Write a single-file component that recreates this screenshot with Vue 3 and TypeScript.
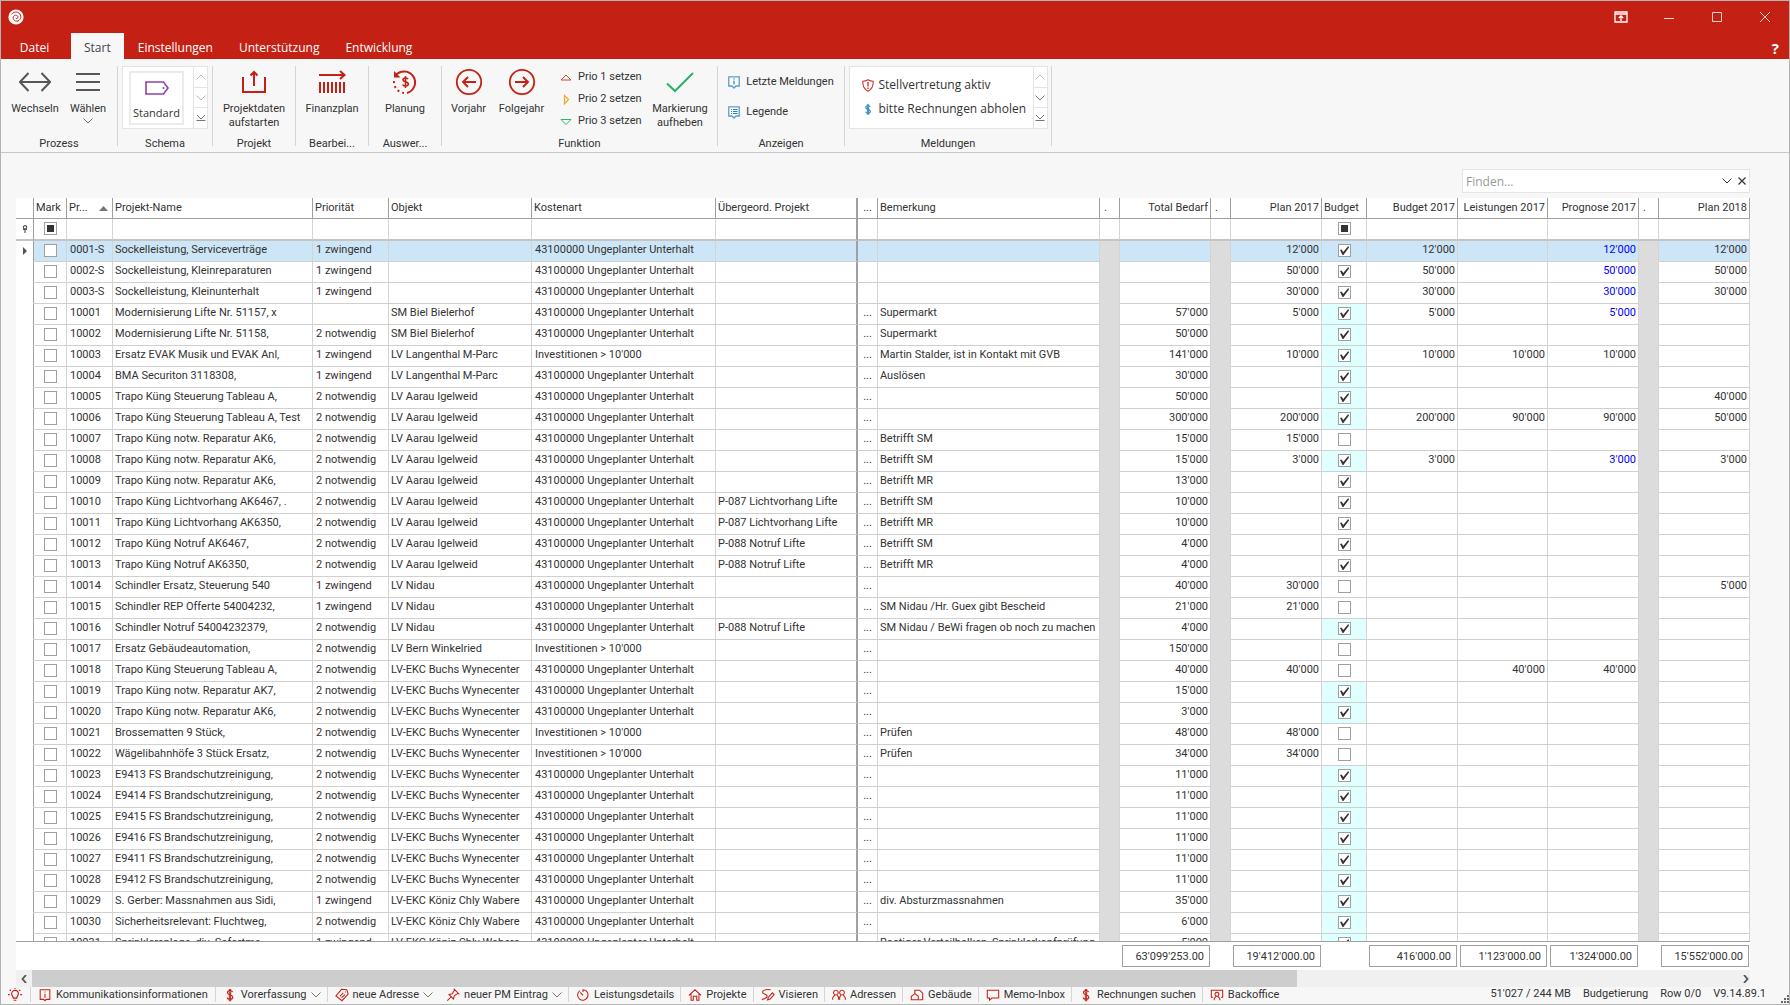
<script setup lang="ts">
import { ref } from 'vue'

interface Row {
  nr: string
  name: string
  prio: string
  objekt: string
  kost: string
  ueber: string
  dots: string
  bem: string
  total: string
  plan: string
  budget: boolean
  tint: boolean
  b17: string
  l17: string
  p17: string
  blue: boolean
  p18: string
}

const UNTERHALT = '43100000 Ungeplanter Unterhalt'
const INVEST = "Investitionen > 10'000"
const PRIO = ['', '1 zwingend', '2 notwendig']
const BUCHS = 'LV-EKC Buchs Wynecenter'
const AARAU = 'LV Aarau Igelweid'

function row(
  nr: string,
  name: string,
  prio: number,
  objekt: string,
  total: string,
  state: '' | 'x' | 'xt',
  more: Partial<Row> = {},
): Row {
  return {
    nr, name, prio: PRIO[prio], objekt, kost: UNTERHALT, ueber: '', dots: '...', bem: '',
    total, plan: '', budget: state !== '', tint: state === 'xt',
    b17: '', l17: '', p17: '', blue: false, p18: '', ...more,
  }
}

const rows = ref<Row[]>([
  row('0001-S', 'Sockelleistung, Serviceverträge', 1, '', '', 'x', { dots: '', plan: "12'000", b17: "12'000", p17: "12'000", blue: true, p18: "12'000" }),
  row('0002-S', 'Sockelleistung, Kleinreparaturen', 1, '', '', 'x', { dots: '', plan: "50'000", b17: "50'000", p17: "50'000", blue: true, p18: "50'000" }),
  row('0003-S', 'Sockelleistung, Kleinunterhalt', 1, '', '', 'x', { dots: '', plan: "30'000", b17: "30'000", p17: "30'000", blue: true, p18: "30'000" }),
  row('10001', 'Modernisierung Lifte Nr. 51157, x', 0, 'SM Biel Bielerhof', "57'000", 'xt', { bem: 'Supermarkt', plan: "5'000", b17: "5'000", p17: "5'000", blue: true }),
  row('10002', 'Modernisierung Lifte Nr. 51158,', 2, 'SM Biel Bielerhof', "50'000", 'xt', { bem: 'Supermarkt' }),
  row('10003', 'Ersatz EVAK Musik und EVAK Anl,', 1, 'LV Langenthal M-Parc', "141'000", 'xt', { kost: INVEST, bem: 'Martin Stalder, ist in Kontakt mit GVB', plan: "10'000", b17: "10'000", l17: "10'000", p17: "10'000" }),
  row('10004', 'BMA Securiton 3118308,', 1, 'LV Langenthal M-Parc', "30'000", 'xt', { bem: 'Auslösen' }),
  row('10005', 'Trapo Küng Steuerung Tableau A,', 2, AARAU, "50'000", 'xt', { p18: "40'000" }),
  row('10006', 'Trapo Küng Steuerung Tableau A, Test', 2, AARAU, "300'000", 'xt', { plan: "200'000", b17: "200'000", l17: "90'000", p17: "90'000", p18: "50'000" }),
  row('10007', 'Trapo Küng notw. Reparatur AK6,', 2, AARAU, "15'000", '', { bem: 'Betrifft SM', plan: "15'000" }),
  row('10008', 'Trapo Küng notw. Reparatur AK6,', 2, AARAU, "15'000", 'xt', { bem: 'Betrifft SM', plan: "3'000", b17: "3'000", p17: "3'000", blue: true, p18: "3'000" }),
  row('10009', 'Trapo Küng notw. Reparatur AK6,', 2, AARAU, "13'000", 'x', { bem: 'Betrifft MR' }),
  row('10010', 'Trapo Küng Lichtvorhang AK6467, .', 2, AARAU, "10'000", 'x', { ueber: 'P-087 Lichtvorhang Lifte', bem: 'Betrifft SM' }),
  row('10011', 'Trapo Küng Lichtvorhang AK6350,', 2, AARAU, "10'000", 'x', { ueber: 'P-087 Lichtvorhang Lifte', bem: 'Betrifft MR' }),
  row('10012', 'Trapo Küng Notruf AK6467,', 2, AARAU, "4'000", 'x', { ueber: 'P-088 Notruf Lifte', bem: 'Betrifft SM' }),
  row('10013', 'Trapo Küng Notruf AK6350,', 2, AARAU, "4'000", 'x', { ueber: 'P-088 Notruf Lifte', bem: 'Betrifft MR' }),
  row('10014', 'Schindler Ersatz, Steuerung 540', 1, 'LV Nidau', "40'000", '', { plan: "30'000", p18: "5'000" }),
  row('10015', 'Schindler REP Offerte 54004232,', 1, 'LV Nidau', "21'000", '', { bem: 'SM Nidau /Hr. Guex gibt Bescheid', plan: "21'000" }),
  row('10016', 'Schindler Notruf 54004232379,', 2, 'LV Nidau', "4'000", 'xt', { ueber: 'P-088 Notruf Lifte', bem: 'SM Nidau / BeWi fragen ob noch zu machen' }),
  row('10017', 'Ersatz Gebäudeautomation,', 2, 'LV Bern Winkelried', "150'000", '', { kost: INVEST }),
  row('10018', 'Trapo Küng Steuerung Tableau A,', 2, BUCHS, "40'000", '', { plan: "40'000", l17: "40'000", p17: "40'000" }),
  row('10019', 'Trapo Küng notw. Reparatur AK7,', 2, BUCHS, "15'000", 'xt'),
  row('10020', 'Trapo Küng notw. Reparatur AK6,', 2, BUCHS, "3'000", 'xt'),
  row('10021', 'Brossematten 9 Stück,', 2, BUCHS, "48'000", '', { kost: INVEST, bem: 'Prüfen', plan: "48'000" }),
  row('10022', 'Wägelibahnhöfe 3 Stück Ersatz,', 2, BUCHS, "34'000", '', { kost: INVEST, bem: 'Prüfen', plan: "34'000" }),
  row('10023', 'E9413 FS Brandschutzreinigung,', 2, BUCHS, "11'000", 'xt'),
  row('10024', 'E9414 FS Brandschutzreinigung,', 2, BUCHS, "11'000", 'xt'),
  row('10025', 'E9415 FS Brandschutzreinigung,', 2, BUCHS, "11'000", 'xt'),
  row('10026', 'E9416 FS Brandschutzreinigung,', 2, BUCHS, "11'000", 'xt'),
  row('10027', 'E9411 FS Brandschutzreinigung,', 2, BUCHS, "11'000", 'xt'),
  row('10028', 'E9412 FS Brandschutzreinigung,', 2, BUCHS, "11'000", 'xt'),
  row('10029', 'S. Gerber: Massnahmen aus Sidi,', 1, 'LV-EKC Köniz Chly Wabere', "35'000", 'xt', { bem: 'div. Absturzmassnahmen' }),
  row('10030', 'Sicherheitsrelevant: Fluchtweg,', 2, 'LV-EKC Köniz Chly Wabere', "6'000", 'xt'),
  row('10031', 'Sprinkleranlage, div. Sofortma,', 1, 'LV-EKC Köniz Chly Wabere', "5'000", 'xt', { bem: 'Rostiger Verteilbalken, Sprinklerkopfprüfung' }),
])

const columns: { label: string; cls: string }[] = [
  { label: '', cls: 'c-ind' },
  { label: 'Mark', cls: 'c-mark' },
  { label: 'Pr...', cls: 'c-nr' },
  { label: 'Projekt-Name', cls: 'c-name' },
  { label: 'Priorität', cls: 'c-prio' },
  { label: 'Objekt', cls: 'c-obj' },
  { label: 'Kostenart', cls: 'c-kost' },
  { label: 'Übergeord. Projekt', cls: 'c-ueber' },
  { label: '...', cls: 'c-dots' },
  { label: 'Bemerkung', cls: 'c-bem' },
  { label: '.', cls: 'c-gap' },
  { label: 'Total Bedarf', cls: 'c-num' },
  { label: '.', cls: 'c-gap' },
  { label: 'Plan 2017', cls: 'c-num' },
  { label: 'Budget', cls: 'c-bud' },
  { label: 'Budget 2017', cls: 'c-num' },
  { label: 'Leistungen 2017', cls: 'c-num c-leist' },
  { label: 'Prognose 2017', cls: 'c-num' },
  { label: '.', cls: 'c-gap' },
  { label: 'Plan 2018', cls: 'c-num' },
]

const sums: Record<number, string> = {
  11: "63'099'253.00",
  13: "19'412'000.00",
  15: "416'000.00",
  16: "1'123'000.00",
  17: "1'324'000.00",
  19: "15'552'000.00",
}

const tabs = ['Datei', 'Start', 'Einstellungen', 'Unterstützung', 'Entwicklung']

const dollar = 'M11 4.5C10.5 3.4 9.4 3 8 3 6.2 3 5 3.9 5 5.3 5 8.6 11.2 7 11.2 10.6 11.2 12.1 9.9 13 8 13 6.3 13 5 12.3 4.8 11M7.2 1V15M8.8 1V15'

const tools: { label: string; d: string; drop?: boolean; sep: boolean }[] = [
  { label: 'Kommunikationsinformationen', d: 'M2.5 2H13.5V13H9.5L8 14.5 6.5 13H2.5ZM8 6.5V11M8 4V5.2', sep: true },
  { label: 'Vorerfassung', d: dollar, drop: true, sep: true },
  { label: 'neue Adresse', d: 'M7.5 1.5L13.5 2 15 7 8 14.500 1 9ZM5.500 9.500L9.500 5.500M7.500 11L11.500 7.500M11.500 4.500h1', drop: true, sep: false },
  { label: 'neuer PM Eintrag', d: 'M1.5 14.5L6 10M3.5 7.5L8.5 12.5 9.5 9 13 6.5 14.5 6.5 9.5 1.5 9.5 3 7 6.5Z', drop: true, sep: true },
  { label: 'Leistungsdetails', d: 'M4.5 3A6 6 0 1 0 8 2V4.5M8 8.5L5 5M11 2.8l1 .6', sep: true },
  { label: 'Projekte', d: 'M1 8.5L8 2 15 8.5M3.5 7V14H6V9.5H10V14H12.5V7', sep: true },
  { label: 'Visieren', d: 'M11 2C5 1 1 3 2 5.5 3 7.5 8 7 7 10 6.5 12 3.5 12 1 13.5M7.5 13.5L8.5 10.5 13 5.5 15 7.5 10.5 12.5Z', sep: true },
  { label: 'Adressen', d: 'M4.5 2.5A2.7 2.7 0 1 1 4.4 2.5M11.5 2.5A2.7 2.7 0 1 1 11.4 2.5M.8 13.5V11L3 8.2M6 8.2L7.5 10.5V13.5M8.8 13.5V10.5L10 8.2M13 8.2L15.2 11V13.5', sep: true },
  { label: 'Gebäude', d: 'M5.5 6.5V2.5H11L14.5 6V13.5H10.5M1.5 9.5L5.5 6.5 9.5 9.5V13.5H1.5Z', sep: true },
  { label: 'Memo-Inbox', d: 'M1.5 2.5H14.5V11.5H7L4 14V11.5H1.5Z', sep: true },
  { label: 'Rechnungen suchen', d: dollar, sep: true },
  { label: 'Backoffice', d: 'M3.5 10.5H1.5V2.5H14.5V10.5H12.5M8 5A2.2 2.2 0 1 1 7.9 5M4.8 14V12L7 9.5M9 9.5L11.2 12V14', sep: false },
]
</script>

<template>
  <div class="window">
    <header class="titlebar">
      <svg class="logo" viewBox="0 0 16 16"><circle cx="8" cy="8" r="7.6" fill="#fff" /><path d="M3.5 5.5C5 2.8 9.5 2.3 11.8 4.8 14 7.6 12.3 12 8.8 12.2 5.8 12.2 4.5 9.4 5.6 7.4 6.8 5.4 10 6 10 8.2 9.8 9.8 8 10 7.6 8.8" fill="none" stroke="#c42013" stroke-width="1" /></svg>
      <div class="win-btns">
        <button type="button" aria-label="Menüband"><svg viewBox="0 0 14 12" width="14" height="12"><path d="M1 1H13V11H1ZM1 3H13M7 10V5M4.8 7L7 4.8 9.2 7" fill="none" stroke="#fff" stroke-width="1.3" /></svg></button>
        <button type="button" aria-label="Minimieren"><svg viewBox="0 0 10 10" width="10" height="10"><path d="M0 6.5H10" stroke="#f6d5d1" /></svg></button>
        <button type="button" aria-label="Maximieren"><svg viewBox="0 0 10 10" width="10" height="10"><path d="M.5 .5H9.5V9.5H.5Z" fill="none" stroke="#f6d5d1" /></svg></button>
        <button type="button" aria-label="Schliessen"><svg viewBox="0 0 10 10" width="10" height="10"><path d="M0 0L10 10M10 0L0 10" stroke="#f6d5d1" /></svg></button>
      </div>
    </header>
    <nav class="tabs">
      <button v-for="t in tabs" :key="t" type="button" :class="{ active: t === 'Start' }">{{ t }}</button>
      <button type="button" class="help" aria-label="Hilfe">?</button>
    </nav>

    <section class="ribbon">
      <div class="group g-prozess">
        <div class="items">
          <button type="button" class="big">
            <svg viewBox="0 0 32 28"><path d="M1 14H31M9.5 5L.9 14 9.5 23M22.500 5L31.100 14 22.500 23" fill="none" stroke="#555" stroke-width="2" /></svg>
            <span>Wechseln</span>
          </button>
          <button type="button" class="big">
            <svg viewBox="0 0 32 28"><path d="M4 6H28M4 14H28M4 22H28" stroke="#555" stroke-width="2" /></svg>
            <span>Wählen</span>
            <svg class="drop" viewBox="0 0 10 6"><path d="M.5 .5L5 5 9.500 .5" fill="none" stroke="#777" /></svg>
          </button>
        </div>
        <div class="caption">Prozess</div>
      </div>

      <div class="group g-schema">
        <div class="items">
          <div class="gallery">
            <button type="button" class="tile">
              <svg viewBox="0 0 24 14"><path d="M1 1H18.500L23 7 18.500 13H1Z" fill="none" stroke="#8e3fae" stroke-width="1.600" /><circle cx="18.500" cy="7" r="1" fill="#8e3fae" /></svg>
              <span>Standard</span>
            </button>
            <div class="spin">
              <button type="button" aria-label="Nach oben"><svg viewBox="0 0 10 6"><path d="M.5 5.500L5 1 9.500 5.500" fill="none" stroke="#bbb" /></svg></button>
              <button type="button" aria-label="Nach unten"><svg viewBox="0 0 10 6"><path d="M.5 .5L5 5 9.500 .5" fill="none" stroke="#bbb" /></svg></button>
              <button type="button" aria-label="Alle anzeigen"><svg viewBox="0 0 10 6"><path d="M1 0L5 4 9 0M.5 5.500H9.500" fill="none" stroke="#777" /></svg></button>
            </div>
          </div>
        </div>
        <div class="caption">Schema</div>
      </div>

      <div class="group g-projekt">
        <div class="items">
          <button type="button" class="big">
            <svg viewBox="0 0 32 28"><path d="M5 9V24H27V9M16 18V4M12.500 7.500L16 4 19.500 7.500" fill="none" stroke="#c42013" stroke-width="2" /></svg>
            <span>Projektdaten<br />aufstarten</span>
          </button>
        </div>
        <div class="caption">Projekt</div>
      </div>

      <div class="group g-slim">
        <div class="items">
          <button type="button" class="big">
            <svg viewBox="0 0 32 28"><path d="M3 7H28M24 3L28.500 7 24 11M4 14V25M8 14V25M12 14V25M16 14V25M20 14V25M24 14V25M28 14V25" fill="none" stroke="#c42013" stroke-width="2" /></svg>
            <span>Finanzplan</span>
          </button>
        </div>
        <div class="caption">Bearbei...</div>
      </div>

      <div class="group g-slim">
        <div class="items">
          <button type="button" class="big">
            <svg viewBox="0 0 32 28"><path d="M6.500 7.500A11 11 0 1 1 18 25" fill="none" stroke="#c42013" stroke-width="2" /><path d="M5 3V9.500H11.500Z" fill="#c42013" /><path d="M15 25A11 11 0 0 1 5.200 12" fill="none" stroke="#c42013" stroke-width="2" stroke-dasharray="2 3" /><path d="M19 11.200C18.500 10.200 17.500 10 16.500 10 15 10 14 10.700 14 11.800 14 14.500 19.300 13 19.300 16 19.300 17.300 18.200 18 16.500 18 15 18 14 17.500 13.700 16.500M16.500 8V20" fill="none" stroke="#c42013" stroke-width="1.600" /></svg>
            <span>Planung</span>
          </button>
        </div>
        <div class="caption">Auswer...</div>
      </div>

      <div class="group g-funktion">
        <div class="items">
          <button type="button" class="big">
            <svg viewBox="0 0 32 28"><circle cx="16" cy="14" r="12.200" fill="none" stroke="#c42013" stroke-width="1.800" /><path d="M23 14H10M15 9L10 14 15 19" fill="none" stroke="#c42013" stroke-width="1.900" /></svg>
            <span>Vorjahr</span>
          </button>
          <button type="button" class="big">
            <svg viewBox="0 0 32 28"><circle cx="16" cy="14" r="12.200" fill="none" stroke="#c42013" stroke-width="1.800" /><path d="M9 14H22M17 9L22 14 17 19" fill="none" stroke="#c42013" stroke-width="1.900" /></svg>
            <span>Folgejahr</span>
          </button>
          <div class="stack prio">
            <button type="button"><svg viewBox="0 0 12 12"><path d="M1 8.500L6 3.500 11 8.500Z" fill="none" stroke="#d2473c" /></svg>Prio 1 setzen</button>
            <button type="button"><svg viewBox="0 0 12 12"><path d="M4.500 2L8.500 6 4.500 10.500Z" fill="none" stroke="#f5a623" stroke-width="1.200" /></svg>Prio 2 setzen</button>
            <button type="button"><svg viewBox="0 0 12 12"><path d="M1 4L6 9 11 4Z" fill="none" stroke="#2fb36f" /></svg>Prio 3 setzen</button>
          </div>
          <button type="button" class="big wide">
            <svg viewBox="0 0 32 28"><path d="M3 15.500L11 23 29 5" fill="none" stroke="#2bb067" stroke-width="2" /></svg>
            <span>Markierung<br />aufheben</span>
          </button>
        </div>
        <div class="caption">Funktion</div>
      </div>

      <div class="group g-anzeigen">
        <div class="items">
          <div class="stack show">
            <button type="button"><svg viewBox="0 0 12 13"><path d="M.8 .8H11.200V10H8L6 12 4 10H.8Z" fill="#fff" stroke="#5b9bc9" stroke-width="1.300" /><path d="M6 4.500V8.500M6 2.300V3.500" stroke="#2f7fb8" stroke-width="1.200" /></svg>Letzte Meldungen</button>
            <button type="button"><svg viewBox="0 0 12 13"><path d="M.8 .8H11.200V10H8L6 12 4 10H.8Z" fill="#fff" stroke="#5b9bc9" stroke-width="1.300" /><path d="M3 3.500H4M5 3.500H9.500M3 5.500H4M5 5.500H9.500M3 7.500H4M5 7.500H9.500" stroke="#2f7fb8" /></svg>Legende</button>
          </div>
        </div>
        <div class="caption">Anzeigen</div>
      </div>

      <div class="group g-meldungen">
        <div class="items">
          <div class="gallery">
            <div class="stack notes">
              <button type="button"><svg viewBox="0 0 12 13"><path d="M6 .8C4.500 1.800 2.500 2.300 .8 2.300 .6 7 2 10.500 6 12.200 10 10.500 11.400 7 11.200 2.300 9.500 2.300 7.500 1.800 6 .8Z" fill="none" stroke="#c8362b" stroke-width="1.100" /><path d="M6 3V7.500M6 8.500V10" stroke="#c8362b" stroke-width="1.400" /></svg>Stellvertretung aktiv</button>
              <button type="button"><svg viewBox="0 0 16 16"><path :d="dollar" fill="none" stroke="#3f8fc4" stroke-width="1.500" /></svg>bitte Rechnungen abholen</button>
            </div>
            <div class="spin">
              <button type="button" aria-label="Nach oben"><svg viewBox="0 0 10 6"><path d="M.5 5.500L5 1 9.500 5.500" fill="none" stroke="#bbb" /></svg></button>
              <button type="button" aria-label="Nach unten"><svg viewBox="0 0 10 6"><path d="M.5 .5L5 5 9.500 .5" fill="none" stroke="#777" /></svg></button>
              <button type="button" aria-label="Alle anzeigen"><svg viewBox="0 0 10 6"><path d="M1 0L5 4 9 0M.5 5.500H9.500" fill="none" stroke="#777" /></svg></button>
            </div>
          </div>
        </div>
        <div class="caption">Meldungen</div>
      </div>
    </section>

    <main class="content">
      <div class="find">
        <input type="text" placeholder="Finden..." aria-label="Finden" />
        <button type="button" aria-label="Verlauf"><svg viewBox="0 0 10 6" width="10" height="6"><path d="M.5 .5L5 5 9.500 .5" fill="none" stroke="#333" /></svg></button>
        <button type="button" aria-label="Leeren"><svg viewBox="0 0 8 8" width="8" height="8"><path d="M.5 .5L7.500 7.500M7.500 .5L.5 7.500" stroke="#333" stroke-width="1.200" /></svg></button>
      </div>

      <div class="grid">
        <div class="viewport">
          <table>
            <colgroup><col v-for="(c, i) in columns" :key="i" :class="c.cls" /></colgroup>
            <thead>
              <tr class="head">
                <th v-for="(c, i) in columns" :key="i" :class="c.cls" scope="col">
                  {{ c.label }}<svg v-if="c.cls === 'c-nr'" class="sort" viewBox="0 0 9 5"><path d="M0 5L4.500 0 9 5Z" fill="#777" /></svg>
                </th>
              </tr>
              <tr class="filter">
                <td v-for="(c, i) in columns" :key="i" :class="c.cls">
                  <svg v-if="c.cls === 'c-ind'" viewBox="0 0 6 8" width="6" height="8"><circle cx="3" cy="2.300" r="1.700" fill="none" stroke="#555" stroke-width="1.200" /><path d="M3 4V8M1 4.500H5" stroke="#555" stroke-width="1.200" /></svg>
                  <input v-else-if="c.cls === 'c-mark' || c.cls === 'c-bud'" type="checkbox" class="mixed" :aria-label="'Filter ' + c.label" />
                </td>
              </tr>
            </thead>
            <tbody>
              <tr v-for="(r, i) in rows" :key="r.nr" :class="{ selected: i === 0 }">
                <td class="c-ind"><svg v-if="i === 0" viewBox="0 0 4 8" width="4" height="8"><path d="M0 0L4 4 0 8Z" fill="#555" /></svg></td>
                <td class="c-mark"><input type="checkbox" :aria-label="'Markieren ' + r.nr" /></td>
                <td class="c-nr">{{ r.nr }}</td>
                <td>{{ r.name }}</td>
                <td class="c-prio">{{ r.prio }}</td>
                <td>{{ r.objekt }}</td>
                <td class="c-kost">{{ r.kost }}</td>
                <td class="c-ueber">{{ r.ueber }}</td>
                <td class="c-dots">{{ r.dots }}</td>
                <td>{{ r.bem }}</td>
                <td class="c-gap"></td>
                <td class="c-num">{{ r.total }}</td>
                <td class="c-gap"></td>
                <td class="c-num">{{ r.plan }}</td>
                <td class="c-bud" :class="{ tint: r.tint }"><input v-model="r.budget" type="checkbox" :aria-label="'Budget ' + r.nr" /></td>
                <td class="c-num">{{ r.b17 }}</td>
                <td class="c-num">{{ r.l17 }}</td>
                <td class="c-num" :class="{ blue: r.blue }">{{ r.p17 }}</td>
                <td class="c-gap"></td>
                <td class="c-num">{{ r.p18 }}</td>
              </tr>
            </tbody>
          </table>
        </div>
        <table class="sums">
          <colgroup><col v-for="(c, i) in columns" :key="i" :class="c.cls" /></colgroup>
          <tbody>
            <tr>
              <td v-for="(c, i) in columns" :key="i"><div v-if="sums[i]">{{ sums[i] }}</div></td>
            </tr>
          </tbody>
        </table>
        <div class="hscroll">
          <button type="button" aria-label="Nach links"><svg viewBox="0 0 6 8" width="6" height="8"><path d="M5 0L1.500 4 5 8" fill="none" stroke="#555" stroke-width="1.800" /></svg></button>
          <div class="track"><div class="thumb"></div></div>
          <button type="button" class="right" aria-label="Nach rechts"><svg viewBox="0 0 6 8" width="6" height="8"><path d="M1 0L4.500 4 1 8" fill="none" stroke="#555" stroke-width="1.800" /></svg></button>
        </div>
      </div>
    </main>

    <footer class="status">
      <button type="button" class="bulb" aria-label="Tipps"><svg viewBox="0 0 16 16"><path d="M6 11.500C6 9.500 4.200 9 4.200 6.500A3.800 3.800 0 0 1 11.800 6.500C11.800 9 10 9.500 10 11.500ZM6.500 14H9.500M0 7.500H2M14 7.500H16M2 2L3.200 3.200M14 2L12.800 3.200M8 0V1.200" fill="none" stroke="#c42013" stroke-width="1.300" /></svg></button>
      <button v-for="t in tools" :key="t.label" type="button" class="tool" :class="{ sep: t.sep }">
        <svg viewBox="0 0 16 16"><path :d="t.d" fill="none" stroke="#c42013" stroke-width="1.200" /></svg>
        <span>{{ t.label }}</span>
        <svg v-if="t.drop" class="drop" viewBox="0 0 10 6"><path d="M.5 .5L5 5 9.500 .5" fill="none" stroke="#777" /></svg>
      </button>
      <div class="info">
        <span>51'027 / 244 MB</span>
        <span>Budgetierung</span>
        <span>Row 0/0</span>
        <span>V9.14.89.1</span>
        <svg viewBox="0 0 8 8" width="8" height="8"><path d="M6 0h2v2H6zM3 3h2v2H3zM6 3h2v2H6zM0 6h2v2H0zM3 6h2v2H3zM6 6h2v2H6z" fill="#666" /></svg>
      </div>
    </footer>
  </div>
</template>

<style>
body {
  margin: 0;
}
</style>

<style scoped>
* {
  box-sizing: border-box;
}
.window {
  display: flex;
  flex-direction: column;
  height: 100vh;
  border: 1px solid #b4b4b4;
  background: #f7f7f7;
  color: #333;
  font: 11px/14px Roboto, "DejaVu Sans Condensed", sans-serif;
}
button {
  margin: 0;
  padding: 0;
  border: 0;
  background: none;
  color: inherit;
  font: inherit;
  white-space: nowrap;
}
.titlebar {
  display: flex;
  align-items: center;
  justify-content: space-between;
  flex: none;
  height: 32px;
  background: #c42013;
}
.logo {
  width: 16px;
  height: 16px;
  margin-left: 7px;
}
.win-btns {
  display: flex;
}
.win-btns button {
  display: flex;
  align-items: center;
  justify-content: center;
  width: 48px;
  height: 32px;
}
.tabs {
  display: flex;
  flex: none;
  height: 26px;
  padding-left: 4px;
  background: #c42013;
  color: #fff;
  font: 12px/22px "Open Sans", "Noto Sans", sans-serif;
}
.tabs button {
  padding: 4px 13px 0;
}
.tabs button:first-child {
  width: 66px;
  padding-right: 20px;
}
.tabs .active {
  margin-right: 1px;
  background: #f7f7f7;
  color: #444;
}
.tabs .help {
  margin-left: auto;
  padding: 4px 10px 0;
  font-size: 15px;
  font-weight: 700;
}
.ribbon {
  display: flex;
  flex: none;
  height: 94px;
  padding-top: 7px;
  border-bottom: 1px solid #c6c6c6;
}
.group {
  display: flex;
  flex-direction: column;
  flex: none;
  height: 80px;
  border-right: 1px solid #d4d4d4;
}
.g-prozess { width: 117px; }
.g-schema { width: 95px; }
.g-projekt { width: 83px; }
.g-slim { width: 73px; }
.g-funktion { width: 276px; }
.g-anzeigen { width: 127px; }
.g-meldungen { width: 207px; }
.items {
  display: flex;
  flex: 1;
  justify-content: center;
}
.g-prozess .items {
  padding-left: 5px;
}
.g-funktion .items {
  justify-content: flex-start;
}
.caption {
  height: 9px;
  text-align: center;
}
.big {
  display: flex;
  flex-direction: column;
  align-items: center;
  width: 53px;
  padding-top: 2px;
}
.big svg {
  width: 32px;
  height: 28px;
  flex: none;
}
.big span {
  margin-top: 6px;
}
.big .drop {
  width: 10px;
  height: 6px;
  margin-top: 2px;
}
.big.wide {
  width: 66px;
}
.stack {
  display: flex;
  flex-direction: column;
}
.stack button {
  display: flex;
  align-items: center;
}
.stack svg {
  flex: none;
  width: 12px;
  height: 13px;
}
.prio {
  width: 99px;
  padding-left: 12px;
}
.prio button {
  height: 22px;
  gap: 6px;
}
.g-anzeigen .items {
  padding-top: 1px;
}
.show button {
  height: 30px;
  gap: 6px;
}
.gallery {
  display: flex;
  height: 63px;
  border: 1px solid #e4e4e4;
  background: #fff;
}
.tile {
  display: flex;
  flex-direction: column;
  align-items: center;
  width: 55px;
  height: 54px;
  margin: 4px 9px 0 6px;
  padding-top: 8px;
  border: 2px solid #ebebeb;
  font: 11px/16px "Open Sans", sans-serif;
}
.tile svg {
  width: 24px;
  height: 14px;
  margin-bottom: 10px;
  flex: none;
}
.spin {
  display: flex;
  flex-direction: column;
  width: 14px;
  border-left: 1px solid #e4e4e4;
}
.spin button {
  display: flex;
  align-items: center;
  justify-content: center;
  flex: 1;
}
.spin button + button {
  border-top: 1px solid #e4e4e4;
}
.spin svg {
  width: 10px;
  height: 6px;
}
.notes {
  width: 183px;
  padding: 6px 0 0 12px;
  font: 12px/18px "Open Sans", sans-serif;
}
.notes button {
  height: 24px;
  gap: 5px;
}
.content {
  display: flex;
  flex-direction: column;
  flex: 1;
  min-height: 0;
  padding: 16px 39px 0 15px;
}
.find {
  display: flex;
  align-items: center;
  flex: none;
  align-self: flex-end;
  width: 288px;
  height: 24px;
  margin-bottom: 5px;
  padding-right: 3px;
  border: 1px solid #e4e4e4;
  background: #fff;
}
.find input {
  flex: 1;
  min-width: 0;
  padding: 2px 3px 0;
  border: 0;
  background: none;
  font: 12px/20px "Open Sans", sans-serif;
}
.find input::placeholder {
  color: #999;
}
.find button {
  display: flex;
  margin-left: 6px;
}
.grid {
  display: flex;
  flex-direction: column;
  flex: 1;
  min-height: 0;
  background: #fff;
}
.viewport {
  flex: 1;
  min-height: 0;
  overflow: hidden;
  border-bottom: 1px solid #a0a0a0;
}
table {
  width: 100%;
  border-spacing: 0;
  table-layout: fixed;
}
col.c-ind { width: 18px; }
col.c-mark { width: 33px; }
col.c-nr { width: 46px; }
col.c-name { width: 200px; }
col.c-prio { width: 76px; }
col.c-obj { width: 143px; }
col.c-kost { width: 184px; }
col.c-ueber { width: 142px; }
col.c-dots { width: 20px; }
col.c-gap { width: 20px; }
col.c-num { width: 91px; }
col.c-leist { width: 90px; }
col.c-bud { width: 45px; }
th,
td {
  height: 21px;
  padding: 1px 2px 3px;
  overflow: hidden;
  border-right: 1px solid #d4d4d4;
  border-bottom: 1px solid #d0d0d0;
  font-weight: 400;
  line-height: 16px;
  text-align: left;
  vertical-align: top;
  white-space: nowrap;
}
.head th {
  padding-top: 2px;
  padding-bottom: 2px;
  border-color: #a0a0a0;
}
.filter td {
  height: 22px;
  border-bottom: 2px solid #c4c4c4;
}
td.c-nr,
td.c-prio,
td.c-kost {
  padding-left: 3px;
}
.sort {
  float: right;
  width: 9px;
  height: 5px;
  margin: 6px 2px 0 0;
}
td.c-ind {
  border-right-color: #a0a0a0;
  padding-top: 6px;
  line-height: 8px;
  text-align: center;
}
tbody td.c-ind {
  border-bottom-color: #fff;
}
td.c-ind svg {
  display: block;
  margin: 0 auto;
}
th.c-ueber,
td.c-ueber {
  border-right: 2px solid #a0a0a0;
}
.c-dots {
  text-align: center;
}
.c-num {
  text-align: right;
}
th.c-gap {
  padding-left: 4px;
}
tbody td.c-gap {
  background: #dcdcdc;
  border-bottom-color: #dcdcdc;
}
td.c-mark,
td.c-bud {
  padding: 3px 0 0 1px;
  text-align: center;
  line-height: 0;
}
.selected td {
  background: #cde6f7;
}
.selected td.c-ind {
  background: #fff;
}
.tint {
  background: #e0ffff;
}
.blue {
  color: #00f;
}
input[type="checkbox"] {
  width: 13px;
  height: 13px;
  margin: 0;
  border: 1px solid #a0a0a0;
  background: #fff;
  appearance: none;
}
input[type="checkbox"]:checked::before {
  content: "";
  display: block;
  width: 9px;
  height: 9px;
  margin: 1px;
  background: #333;
  clip-path: polygon(0 45%, 18% 40%, 36% 68%, 92% 0, 100% 18%, 38% 100%, 28% 100%);
}
.mixed::before {
  content: "";
  display: block;
  width: 7px;
  height: 7px;
  margin: 2px;
  background: #333;
}
.sums {
  flex: none;
}
.sums td {
  height: 28px;
  padding: 3px 1px 3px 2px;
  border: 0;
}
.sums div {
  height: 22px;
  padding-right: 5px;
  border: 1px solid #a0a0a0;
  line-height: 21px;
  text-align: right;
}
.hscroll {
  display: flex;
  flex: none;
  height: 17px;
  background: #f0f0f0;
}
.hscroll button {
  display: flex;
  align-items: center;
  justify-content: center;
  width: 16px;
}
.hscroll .right {
  width: 8px;
}
.track {
  flex: 1;
}
.thumb {
  width: 74%;
  height: 100%;
  background: #cdcdcd;
}
.status {
  display: flex;
  align-items: flex-start;
  flex: none;
  height: 17px;
}
.status button {
  display: flex;
  align-items: center;
  height: 15px;
}
.status svg {
  flex: none;
  width: 14px;
  height: 14px;
}
.bulb {
  padding: 0 8px 0 7px;
  border-right: 1px solid #d4d4d4;
}
.tool {
  gap: 4px;
  padding: 0 7px;
}
.tool:nth-child(n + 3) {
  padding: 0 6px 0 7px;
}
.tool.sep {
  border-right: 1px solid #d4d4d4;
}
.status .drop {
  width: 10px;
  height: 6px;
}
.info {
  display: flex;
  gap: 12px;
  height: 16px;
  margin-left: auto;
}
.info svg {
  align-self: flex-end;
  width: 8px;
  height: 8px;
  margin-left: 3px;
}
</style>
